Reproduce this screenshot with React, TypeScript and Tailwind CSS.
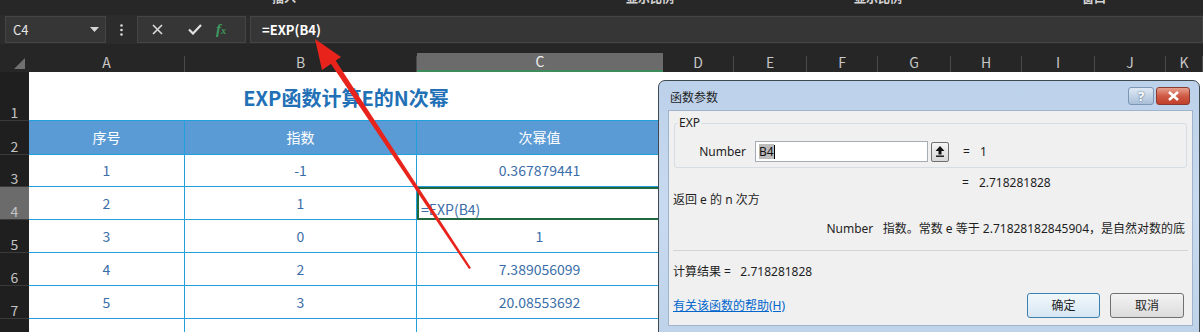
import React from 'react';

const cols = [
  { k: 'A', w: 156 },
  { k: 'B', w: 232 },
  { k: 'C', w: 246 },
  { k: 'D', w: 71 },
  { k: 'E', w: 73 },
  { k: 'F', w: 71 },
  { k: 'G', w: 73 },
  { k: 'H', w: 71 },
  { k: 'I', w: 73 },
  { k: 'J', w: 71 },
  { k: 'K', w: 0 },
];

const rows = [
  ['1', '-1', '0.367879441'],
  ['2', '1', '=EXP(B4)'],
  ['3', '0', '1'],
  ['4', '2', '7.389056099'],
  ['5', '3', '20.08553692'],
  ['', '', ''],
];

const rowNumCls =
  'bg-[#1f1f1f] border-b border-[#3a3a3a] text-[#c4c4c4] text-[14px] leading-[16px] flex items-end justify-center';

const cellCls =
  'bg-white border-r border-b border-[#22a0dc] flex items-center justify-center text-[14px] text-[#3b6ea8]';

const TopBar = () => (
  <div className="h-[15px] bg-[#272727] overflow-hidden flex items-start text-white text-[12px] font-bold leading-[14px]">
    <span className="ml-[272px] -mt-[9px] opacity-80">插入</span>
    <span className="ml-[330px] -mt-[9px] opacity-80">显示比例</span>
    <span className="ml-[180px] -mt-[9px] opacity-80">显示比例</span>
    <span className="ml-[180px] -mt-[9px] opacity-80">窗口</span>
  </div>
);

const FormulaBar = () => (
  <div className="h-[29px] bg-[#2c2c2c] flex items-stretch py-[1px] text-[#e6e6e6]">
    <div className="ml-[5px] w-[101px] bg-[#363636] border border-[#454545] flex items-center justify-between pl-[7px] pr-[6px]">
      <span className="text-[13px]">C4</span>
      <svg width="9" height="5" viewBox="0 0 9 5">
        <path d="M0 0h9L4.5 5z" fill="#d6d6d6" />
      </svg>
    </div>
    <div className="w-[31px] flex items-center justify-center">
      <svg width="3" height="12" viewBox="0 0 3 12">
        <circle cx="1.5" cy="1.5" r="1.3" fill="#d8d8d8" />
        <circle cx="1.5" cy="6" r="1.3" fill="#d8d8d8" />
        <circle cx="1.5" cy="10.5" r="1.3" fill="#d8d8d8" />
      </svg>
    </div>
    <div className="w-[109px] bg-[#363636] border border-[#454545] flex items-center">
      <svg className="ml-[14px]" width="11" height="11" viewBox="0 0 11 11">
        <path d="M1 1l9 9M10 1l-9 9" stroke="#dcdcdc" strokeWidth="1.6" />
      </svg>
      <svg className="ml-[25px]" width="14" height="11" viewBox="0 0 14 11">
        <path d="M1 5.5l4 4L13 1" stroke="#e2e2e2" strokeWidth="2.2" fill="none" />
      </svg>
      <span className="ml-[14px] text-[15px] italic font-bold text-[#3f9a5f] font-['Liberation_Serif',serif] leading-[16px]">
        f<span className="text-[10px]">x</span>
      </span>
    </div>
    <div className="ml-[4px] flex-1 bg-[#363636] border border-[#454545] flex items-center pl-[11px]">
      <span className="text-[13px] font-bold text-white">=EXP(B4)</span>
    </div>
  </div>
);

const Sheet = () => (
  <div className="grid grid-cols-[29px_156px_232px_246px_71px_73px_71px_73px_71px_73px_71px_1fr] grid-rows-[19px_49px_34px_32px_33px_33px_33px_33px_40px]">
    <div className="bg-[#262626] flex items-end justify-end pr-[4px] pb-[3px]">
      <svg width="11" height="11" viewBox="0 0 11 11">
        <path d="M11 0v11H0z" fill="#707070" />
      </svg>
    </div>
    {cols.map((c) =>
      c.k === 'C' ? (
        <div
          key={c.k}
          className="bg-[#6b6b6b] border-b-2 border-[#3d8c5c] flex items-center justify-center text-[14px] text-[#f0f0f0]"
        >
          {c.k}
        </div>
      ) : (
        <div key={c.k} className="bg-[#262626] flex items-stretch">
          <div className="flex-1 flex items-center justify-center text-[14px] text-[#c8c8c8]">{c.k}</div>
          <div className="w-[1px] mt-[3px] bg-[#4a4a4a]" />
        </div>
      )
    )}

    <div className={rowNumCls}>1</div>
    <div className="col-span-3 bg-white border-b border-[#22a0dc] flex items-center justify-center pt-[4px]">
      <span className="text-[20px] font-bold text-[#2270b6]">EXP函数计算E的N次幂</span>
    </div>
    {cols.slice(3).map((c) => (
      <div key={c.k} className="bg-white" />
    ))}

    <div className={rowNumCls}>2</div>
    {['序号', '指数', '次幂值'].map((t) => (
      <div
        key={t}
        className="bg-[#5b9bd5] border-r border-b border-[#22a0dc] flex items-center justify-center text-[14px] text-white"
      >
        {t}
      </div>
    ))}
    {cols.slice(3).map((c) => (
      <div key={c.k} className="bg-white" />
    ))}

    {rows.map((r, i) => (
      <React.Fragment key={i}>
        <div className={i === 1 ? rowNumCls.replace('bg-[#1f1f1f]', 'bg-[#6b6b6b]') : rowNumCls}>
          {i + 3}
        </div>
        <div className={cellCls}>{r[0]}</div>
        <div className={cellCls}>{r[1]}</div>
        {i === 1 ? (
          <div className="bg-white border-2 border-[#21683f] flex items-end pl-[2px] text-[14px] text-[#3b6ea8] leading-[18px]">
            {r[2]}
          </div>
        ) : (
          <div className={cellCls}>{r[2]}</div>
        )}
        {cols.slice(3).map((c) => (
          <div key={c.k} className="bg-white" />
        ))}
      </React.Fragment>
    ))}
  </div>
);

const Arrow = () => (
  <svg className="absolute left-0 top-0 pointer-events-none" width="1203" height="332" viewBox="0 0 1203 332">
    <polygon points="315,39 341,57 322,70" fill="#e8231b" />
    <polygon points="329,61 334,58 471,268 469,269" fill="#e8231b" />
  </svg>
);

const Dialog = () => (
  <div className="absolute left-[658px] top-[80px] w-[542px] h-[256px] rounded-t-[7px] border border-[#404850] bg-gradient-to-b from-[#bcd1ea] via-[#c8daef] to-[#bed3ea] font-['Noto_Sans','Noto_Sans_CJK_SC',sans-serif] text-[12px] leading-[16px] text-[#1e1e1e] flex flex-col">
    <div className="h-[29px] flex items-start">
      <span className="ml-[11px] mt-[9px]">函数参数</span>
      <div className="ml-auto mt-[6px] mr-[9px] flex gap-[2px]">
        <div className="w-[26px] h-[18px] rounded-[3px] border border-[#7d96b6] bg-gradient-to-b from-[#dfe9f5] to-[#a9bfd9] flex items-center justify-center text-[13px] font-bold text-white [text-shadow:0_0_2px_#33475e]">
          ?
        </div>
        <div className="w-[34px] h-[18px] rounded-[3px] border border-[#8a3a30] bg-gradient-to-b from-[#e6a08e] via-[#cf5a45] to-[#c0402b] flex items-center justify-center">
          <svg width="13" height="10" viewBox="0 0 13 10">
            <path d="M2 1l9 8M11 1l-9 8" stroke="#ffffff" strokeWidth="2.6" />
          </svg>
        </div>
      </div>
    </div>
    <div className="ml-[9px] mr-[6px] h-[216px] bg-[#f0f0f0] border border-[#9fb3cb] flex flex-col">
      <div className="mt-[12px] ml-[5px] w-[513px] h-[45px] border border-[#d5dce3] rounded-[3px] relative">
        <span className="absolute -top-[9px] left-[3px] bg-[#f0f0f0] px-[1px] text-[12px]">EXP</span>
        <div className="mt-[17px] flex items-center">
          <span className="w-[71px] text-right">Number</span>
          <div className="ml-[9px] w-[173px] h-[21px] bg-white border border-[#a5acb5] flex items-center pl-[3px]">
            <span className="bg-[#bdbdbd] text-[#111] leading-[15px]">B4</span>
            <span className="w-[1px] h-[14px] bg-black" />
          </div>
          <div className="ml-[3px] w-[18px] h-[20px] rounded-[2px] border border-[#707070] bg-gradient-to-b from-[#f4f4f4] to-[#d8d8d8] flex items-center justify-center">
            <svg width="10" height="11" viewBox="0 0 10 11">
              <path d="M5 0L9.5 5H6.5V8.5H3.5V5H0.5z" fill="#111" />
              <rect x="1" y="9.5" width="8" height="1.4" fill="#111" />
            </svg>
          </div>
          <span className="ml-[14px]">=</span>
          <span className="ml-[10px]">1</span>
        </div>
      </div>
      <div className="mt-[7px] ml-[293px] flex">
        <span>=</span>
        <span className="ml-[10px]">2.718281828</span>
      </div>
      <div className="mt-[1px] ml-[4px]">返回 e 的 n 次方</div>
      <div className="mt-[13px] mr-[7px] text-right">
        Number&nbsp;&nbsp;&nbsp;指数。常数 e 等于 2.71828182845904，是自然对数的底
      </div>
      <div className="mt-[13px] mx-[4px] border-t border-[#d5d5d5]" />
      <div className="mt-[13px] ml-[4px]">计算结果 =&nbsp;&nbsp;&nbsp;2.718281828</div>
      <div className="mt-[13px] ml-[4px] mr-[8px] flex items-center">
        <span className="text-[#0066cc] underline">有关该函数的帮助(H)</span>
        <div className="ml-auto w-[73px] h-[25px] rounded-[3px] border border-[#3c7fb1] bg-gradient-to-b from-[#f2f8fc] to-[#d6e6f3] flex items-center justify-center">
          确定
        </div>
        <div className="ml-[10px] w-[74px] h-[25px] rounded-[3px] border border-[#707070] bg-gradient-to-b from-[#f3f3f3] to-[#dcdcdc] flex items-center justify-center">
          取消
        </div>
      </div>
    </div>
  </div>
);

export default function App() {
  return (
    <div className="relative w-[1203px] h-[332px] overflow-hidden bg-[#262626] font-['Noto_Sans_CJK_SC',sans-serif]">
      <TopBar />
      <FormulaBar />
      <div className="h-[9px] bg-[#262626]" />
      <Sheet />
      <Dialog />
      <Arrow />
    </div>
  );
}
